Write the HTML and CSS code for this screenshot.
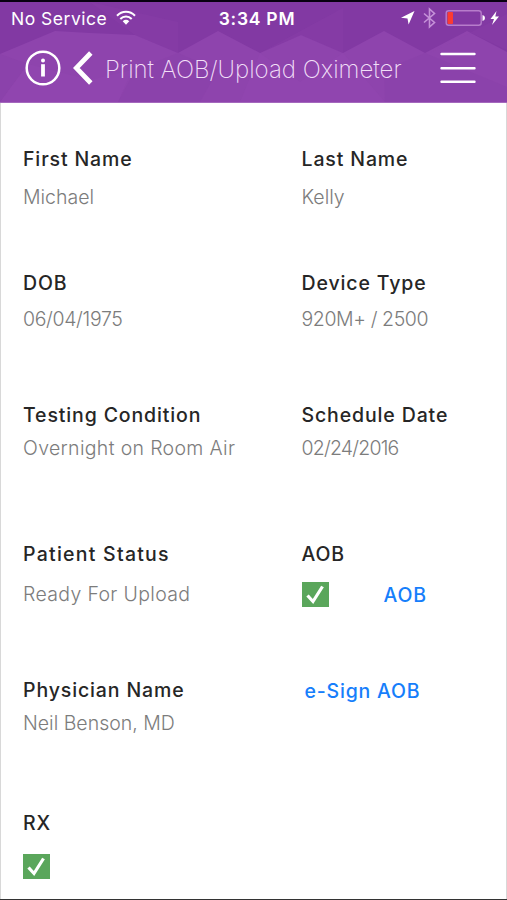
FILE: index.html
```html
<!DOCTYPE html>
<html lang="en">
<head>
<meta charset="utf-8">
<title>Print AOB/Upload Oximeter</title>
<link rel="stylesheet" href="styles.css">
</head>
<body>
<div class="screen">
  <header class="top">
    <svg class="pattern" viewBox="0 0 507 100" preserveAspectRatio="none" aria-hidden="true">
      <path class="dark" d="M0 0H507V50L467 29 425 51 384 29 343 51 301 33 260 51 218 29 178 51 135 33 90 31 55 29 0 52Z"/>
      <path class="dark" d="M0 52L28 62 0 100ZM135 68L178 51 218 68 200 100H118ZM384 68L425 51 507 85V100H385Z" opacity=".22"/>
      <path class="light" d="M90 0L135 33 178 51V20ZM260 51L343 6V51L301 33ZM430 51L507 12V48L467 29Z" opacity=".18"/>
      <path class="light" d="M0 100L28 62 90 78 132 68 118 100ZM260 51L300 80 343 51 385 100H240Z" opacity=".4"/>
    </svg>
    <div class="status">
      <div class="carrier"><span>No Service</span>
        <svg width="20" height="16" viewBox="0 0 20 16"><g fill="none" stroke="#fff" stroke-width="2"><path d="M1 5.8C6 .5 14 .5 19 5.8"/><path d="M4.3 9C7.5 5.7 12.500 5.700 15.700 9"/></g><path fill="#fff" d="M6.700 11.200Q10 8.400 13.300 11.200L10 14.800Z"/></svg>
      </div>
      <time class="clock">3:34 PM</time>
      <div class="indicators">
        <svg width="105" height="24" viewBox="0 0 105 24">
          <path fill="#fff" d="M14.500 5L1 11.800 7.500 12.600 8.600 18.500Z"/>
          <path fill="none" stroke="#c592d8" stroke-width="1.600" d="M24 7.500L34.500 16.500 29.500 21V3L34.500 7.500 24 16.500"/>
          <rect x="46.200" y="4.700" width="35" height="14.500" rx="2.500" fill="none" stroke="#b77dcb" stroke-width="1.400"/>
          <rect x="47.500" y="6" width="5.500" height="12" rx="1" fill="#fb3b32"/>
          <path fill="#fff" d="M82.500 9Q85 9.500 85 12T82.500 15ZM96.500 5L90.500 13H94L92 19 99 10.500H95.300Z"/>
        </svg>
      </div>
    </div>
    <nav class="bar">
      <svg width="36" height="36" viewBox="0 0 36 36"><circle cx="18" cy="18" r="16.300" fill="none" stroke="#fff" stroke-width="2.500"/><circle cx="18" cy="10.500" r="2" fill="#fff"/><path fill="none" stroke="#fff" stroke-width="3.800" d="M18 14.200V26.500"/></svg>
      <svg class="back" width="20" height="34" viewBox="0 0 20 34"><path fill="none" stroke="#fff" stroke-width="4.800" d="M17.800 2L3.300 17 17.800 32"/></svg>
      <h1>Print AOB/Upload Oximeter</h1>
      <svg class="menu" width="36" height="34" viewBox="0 0 36 34"><path fill="none" stroke="#fff" stroke-width="2.400" stroke-linecap="round" d="M1.500 3H34.500M1.500 17.300H34.500M1.500 30.700H34.500"/></svg>
    </nav>
  </header>
  <main class="details">
    <section class="field g14"><h2>First Name</h2><p>Michael</p></section>
    <section class="field g14"><h2>Last Name</h2><p>Kelly</p></section>
    <section class="field g12"><h2>DOB</h2><p class="date">06/04/1975</p></section>
    <section class="field g12"><h2>Device Type</h2><p class="device">920M+ / 2500</p></section>
    <section class="field g9"><h2>Testing Condition</h2><p class="wide">Overnight on Room Air</p></section>
    <section class="field g9"><h2>Schedule Date</h2><p class="date tight">02/24/2016</p></section>
    <section class="field g16"><h2 class="wide-label">Patient Status</h2><p class="wide">Ready For Upload</p></section>
    <section class="field g16"><h2>AOB</h2>
      <div class="choice"><svg class="check" width="27" height="25" viewBox="0 0 27 25"><path fill="#5aa65b" d="M0 0H27V25H0Z"/><path fill="none" stroke="#fff" stroke-width="3.200" d="M5.500 13.500L11 19.500 20.500 4.500"/></svg><a>AOB</a></div>
    </section>
    <section class="field g9"><h2>Physician Name</h2><p>Neil Benson, MD</p></section>
    <section class="field sign"><a>e-Sign AOB</a></section>
    <section class="field g19"><h2>RX</h2>
      <svg class="check" width="27" height="25" viewBox="0 0 27 25"><path fill="#5aa65b" d="M0 0H27V25H0Z"/><path fill="none" stroke="#fff" stroke-width="3.200" d="M5.500 13.500L11 19.500 20.500 4.500"/></svg>
    </section>
  </main>
</div>
</body>
</html>
```
FILE: styles.css
```css
* { box-sizing: border-box; }
body { margin: 0; font-family: Inter, "Liberation Sans", sans-serif; }
.screen { height: 900px; background: #fff; border-top: 2px solid #080010; border-bottom: 1px solid #333; display: flex; flex-direction: column; }
.top { position: relative; height: 101px; background: #8e44ad; color: #fff; flex: none; border-bottom: 1px solid #a468bd; }
.pattern { position: absolute; inset: 0; width: 100%; height: 100%; }
.dark { fill: #8239a3; }
.light { fill: #9449b2; }
.status { position: relative; height: 32px; display: grid; grid-template-columns: 1fr auto 1fr; align-items: center; padding: 0 4px 0 11px; }
.carrier { display: flex; align-items: center; gap: 9px; font-size: 17.5px; letter-spacing: .5px; }
.clock { font-size: 17.5px; font-weight: 600; letter-spacing: .75px; }
.indicators { display: flex; justify-content: flex-end; margin-right: -2px; }
.bar { position: relative; height: 68px; display: flex; align-items: center; padding: 0 31px 0 25px; }
.back { margin: 0 12px; }
h1 { margin: 3px 0 0; font-size: 24px; line-height: 30px; font-weight: 200; color: #f1dff7; white-space: nowrap; }
.menu { margin-left: auto; }
.details { flex: 1; display: grid; grid-template-columns: 278.500px 1fr; grid-template-rows: 123.500px 132.500px 139px 136px 133px 1fr; padding: 44px 0 0 22px; border: solid #d8d8d8; border-width: 0 1px 0 1.5px; }
.field { display: flex; flex-direction: column; align-items: flex-start; }
h2, p, .field a { margin: 0; font-size: 19.500px; line-height: 24px; white-space: nowrap; }
h2 { font-weight: 500; color: #262626; letter-spacing: .87px; }
.wide-label { letter-spacing: 1.25px; }
p { font-weight: 300; color: #7c7c7c; }
.wide { letter-spacing: .33px; }
.date { letter-spacing: -.35px; }
.tight { letter-spacing: -.8px; }
.device { letter-spacing: -.4px; }
.field a { font-weight: 500; color: #167efb; letter-spacing: .8px; }
.g14 { gap: 14px; } .g12 { gap: 12px; } .g9 { gap: 9px; } .g16 { gap: 16px; } .g19 { gap: 19px; }
.choice { display: flex; gap: 55px; align-items: center; }
.sign { padding: 1px 0 0 3px; }
.check { display: block; }
```
